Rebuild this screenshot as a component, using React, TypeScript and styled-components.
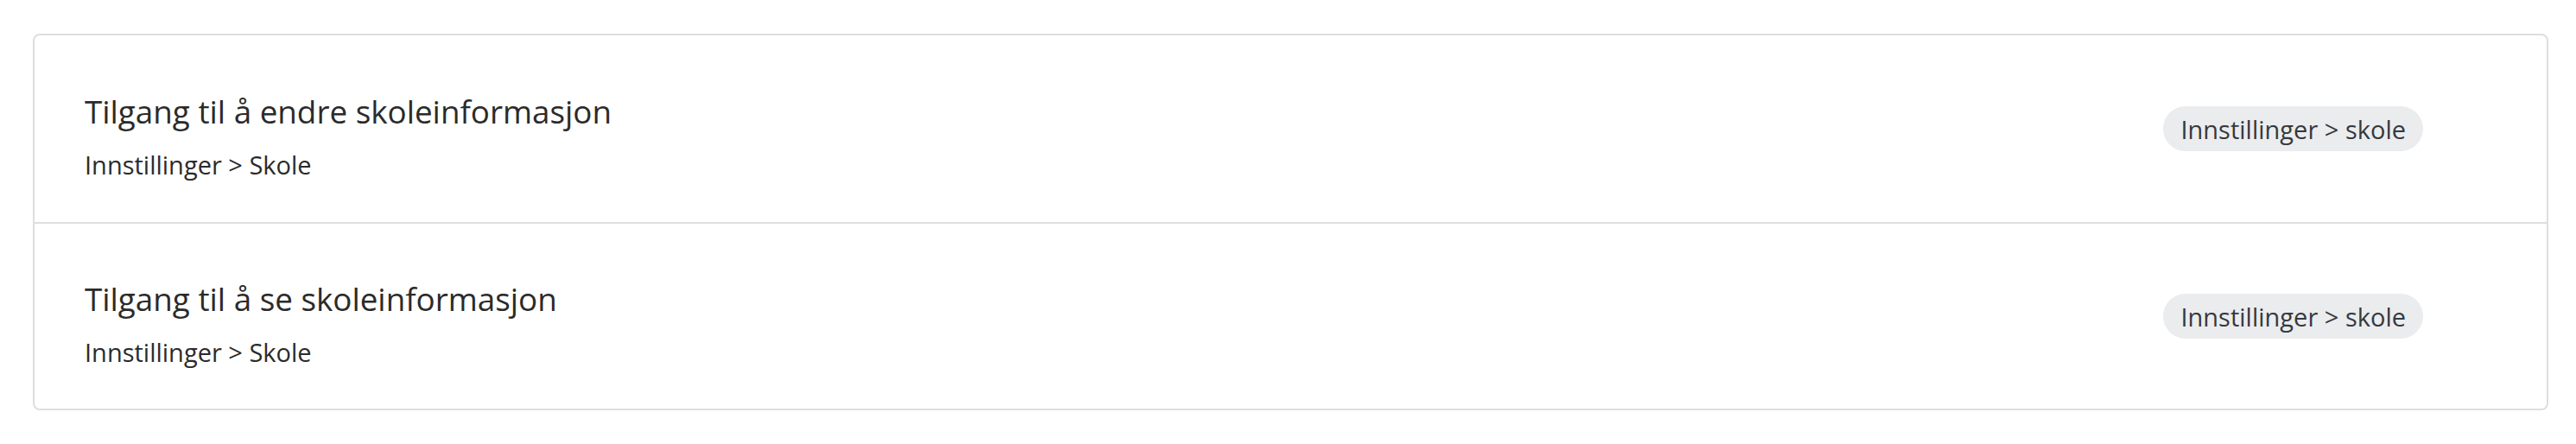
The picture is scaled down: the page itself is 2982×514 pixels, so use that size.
import React from "react";
import styled, { createGlobalStyle } from "styled-components";

const GlobalStyle = createGlobalStyle`
  * { box-sizing: border-box; }
  html, body { margin: 0; padding: 0; background: #ffffff; }
  body { font-family: "Open Sans", "Noto Sans", sans-serif; }
`;

const Page = styled.div`
  padding: 39px 32px 37px 38px;
`;

const Card = styled.section`
  border: 2px solid #dedede;
  border-radius: 8px;
  background: #ffffff;
  overflow: hidden;
`;

const Row = styled.div`
  display: flex;
  align-items: center;
  justify-content: space-between;
  height: 216px;
  padding: 0 143px 0 58px;
  & + & {
    border-top: 2px solid #dedede;
  }
`;

const TextBlock = styled.div`
  display: flex;
  flex-direction: column;
  gap: 17px;
  padding-top: 17px;
`;

const Title = styled.h3`
  margin: 0;
  font-size: 36.8px;
  line-height: 50px;
  font-weight: 400;
  color: #2b2b2b;
`;

const Path = styled.div`
  font-size: 29px;
  line-height: 40px;
  color: #2b2b2b;
`;

const Chip = styled.span`
  display: inline-flex;
  align-items: center;
  height: 52px;
  padding: 0 20px;
  border-radius: 26px;
  background: #ebecee;
  color: #343a40;
  font-size: 29px;
  white-space: nowrap;
`;

const items = [
  { title: "Tilgang til å endre skoleinformasjon", path: "Innstillinger > Skole", tag: "Innstillinger > skole" },
  { title: "Tilgang til å se skoleinformasjon", path: "Innstillinger > Skole", tag: "Innstillinger > skole" },
];

export default function App() {
  return (
    <>
      <GlobalStyle />
      <Page>
        <Card>
          {items.map((it) => (
            <Row key={it.title}>
              <TextBlock>
                <Title>{it.title}</Title>
                <Path>{it.path}</Path>
              </TextBlock>
              <Chip>{it.tag}</Chip>
            </Row>
          ))}
        </Card>
      </Page>
    </>
  );
}
